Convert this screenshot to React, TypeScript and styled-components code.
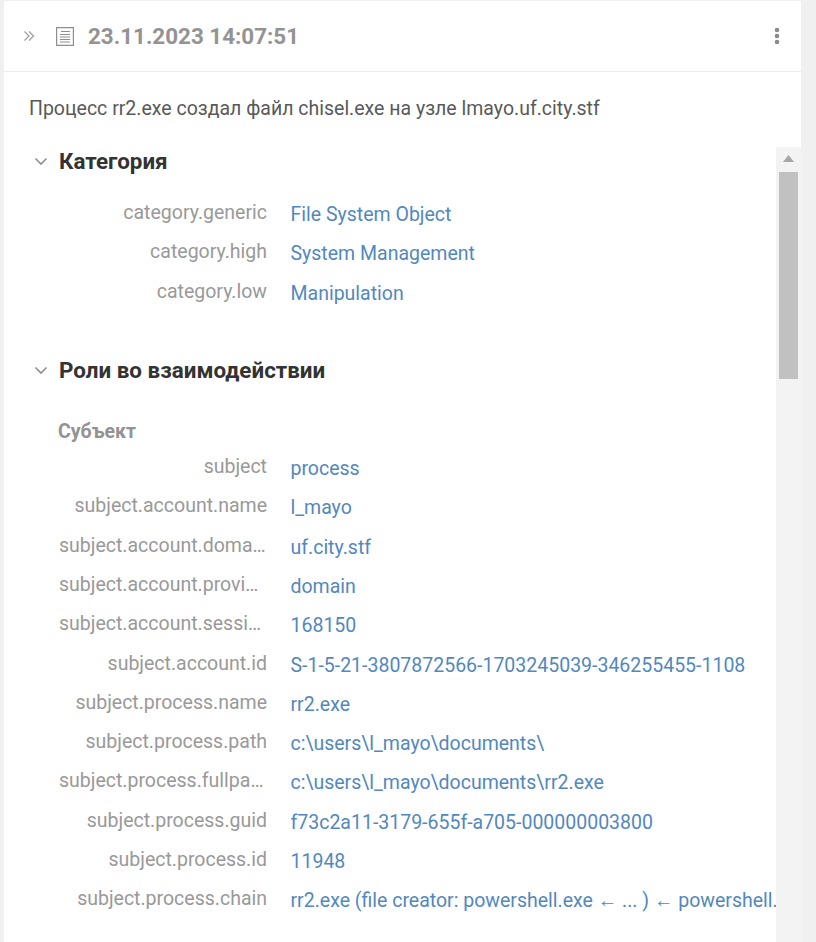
import React from 'react';
import styled, { createGlobalStyle } from 'styled-components';

const GlobalStyle = createGlobalStyle`
  html, body {
    margin: 0;
    height: 100%;
    overflow: hidden;
    background: #f0f0f0;
  }
  body {
    font-family: Roboto, "Noto Sans", sans-serif;
  }
`;

const Panel = styled.div`
  display: flex;
  flex-direction: column;
  width: 797px;
  height: 941px;
  margin: 1px 0 0 4px;
  background: #fff;
`;

const Header = styled.header`
  display: flex;
  flex: none;
  align-items: center;
  height: 71px;
  padding: 0 21px 0 19px;
  border-bottom: 1px solid #ececec;
  box-sizing: border-box;
`;

const Title = styled.h1`
  flex: 1;
  margin: 0 0 0 13px;
  font-size: 22.4px;
  font-weight: 700;
  color: #939393;
`;

const DocSlot = styled.span`
  display: flex;
  margin-left: 20px;
`;

const Message = styled.p`
  flex: none;
  margin: 0;
  padding: 26px 25px 0;
  height: 49px;
  font-size: 19.5px;
  line-height: 22px;
  color: #595959;
`;

const Body = styled.div`
  display: flex;
  flex: 1;
  min-height: 0;
`;

const Content = styled.div`
  flex: 1;
  min-width: 0;
  overflow: hidden;
  padding-top: 2px;
`;

const Scrollbar = styled.div`
  display: flex;
  flex: none;
  flex-direction: column;
  align-items: center;
  width: 25px;
  padding-top: 8px;
  background: #f3f3f3;
`;

const ScrollThumb = styled.div`
  width: 19px;
  height: 207px;
  margin-top: 10px;
  background: #c1c1c1;
`;

const SectionTitle = styled.h2<{ $gap: number }>`
  display: flex;
  align-items: center;
  gap: 10px;
  height: 24px;
  margin: 0 0 ${({ $gap }) => $gap}px 29px;
  font-size: 22.4px;
  font-weight: 700;
  color: #333;
`;

const Rows = styled.div<{ $gap: number }>`
  margin-bottom: ${({ $gap }) => $gap}px;
`;

const GroupTitle = styled.h3`
  margin: 0 0 6px 54px;
  font-size: 19.5px;
  line-height: 22px;
  font-weight: 700;
  color: #939393;
`;

const Row = styled.div`
  display: grid;
  grid-template-columns: 208px 1fr;
  column-gap: 23.5px;
  align-items: center;
  height: 39.3px;
  margin-left: 55px;
  font-size: 19.5px;
  white-space: nowrap;
`;

const Key = styled.span`
  overflow: hidden;
  text-overflow: ellipsis;
  text-align: right;
  color: #999;
  position: relative;
  top: -2px;
`;

const Value = styled.span`
  overflow: hidden;
  color: #5288bd;
`;

const Chevron = () => (
  <svg width="16" height="16" viewBox="0 0 16 16" fill="none" stroke="#8f8f8f" strokeWidth="1.6">
    <path d="M2.5 5.5 8 11l5.5-5.5" />
  </svg>
);

const DoubleChevron = () => (
  <svg width="12" height="12" viewBox="0 0 12 12" fill="none" stroke="#a3a3a3" strokeWidth="1.4">
    <path d="M1.5 1.5 6 6l-4.500 4.500M6 1.500 10.500 6 6 10.500" />
  </svg>
);

const DocIcon = () => (
  <svg width="20" height="21" viewBox="0 0 20 21" fill="none" stroke="#8f8f8f" strokeWidth="1.2">
    <path d="M1.600 1.600h16.800v17.800H1.600z" />
    <path d="M6 5.500h9M5 8.500h10M5 11h10M5 13.500h10M5 16h10" />
  </svg>
);

const DotsIcon = () => (
  <svg width="6" height="20" viewBox="0 0 6 20" fill="#8a8a8a">
    <circle cx="3" cy="4" r="2.300" />
    <circle cx="3" cy="10" r="2.300" />
    <circle cx="3" cy="16" r="2.300" />
  </svg>
);

const ScrollUp = () => (
  <svg width="11" height="7" viewBox="0 0 11 7" fill="#a6a6a6">
    <path d="M5.500 0 11 7H0z" />
  </svg>
);

const categoryRows = [
  ['category.generic', 'File System Object'],
  ['category.high', 'System Management'],
  ['category.low', 'Manipulation'],
];

const subjectRows = [
  ['subject', 'process'],
  ['subject.account.name', 'l_mayo'],
  ['subject.account.domain', 'uf.city.stf'],
  ['subject.account.provider', 'domain'],
  ['subject.account.session', '168150'],
  ['subject.account.id', 'S-1-5-21-3807872566-1703245039-346255455-1108'],
  ['subject.process.name', 'rr2.exe'],
  ['subject.process.path', 'c:\\users\\l_mayo\\documents\\'],
  ['subject.process.fullpath', 'c:\\users\\l_mayo\\documents\\rr2.exe'],
  ['subject.process.guid', 'f73c2a11-3179-655f-a705-000000003800'],
  ['subject.process.id', '11948'],
  ['subject.process.chain', 'rr2.exe (file creator: powershell.exe ← ... ) ← powershell.exe'],
];

const App = () => (
  <>
    <GlobalStyle />
    <Panel>
      <Header>
        <DoubleChevron />
        <DocSlot>
          <DocIcon />
        </DocSlot>
        <Title>23.11.2023 14:07:51</Title>
        <DotsIcon />
      </Header>
      <Message>Процесс rr2.exe создал файл chisel.exe на узле lmayo.uf.city.stf</Message>
      <Body>
        <Content>
          <SectionTitle $gap={22}>
            <Chevron />
            Категория
          </SectionTitle>
          <Rows $gap={45}>
            {categoryRows.map(([k, v]) => (
              <Row key={k}>
                <Key>{k}</Key>
                <Value>{v}</Value>
              </Row>
            ))}
          </Rows>
          <SectionTitle $gap={39}>
            <Chevron />
            Роли во взаимодействии
          </SectionTitle>
          <GroupTitle>Субъект</GroupTitle>
          <Rows $gap={0}>
            {subjectRows.map(([k, v]) => (
              <Row key={k}>
                <Key>{k}</Key>
                <Value>{v}</Value>
              </Row>
            ))}
          </Rows>
        </Content>
        <Scrollbar>
          <ScrollUp />
          <ScrollThumb />
        </Scrollbar>
      </Body>
    </Panel>
  </>
);

export default App;
